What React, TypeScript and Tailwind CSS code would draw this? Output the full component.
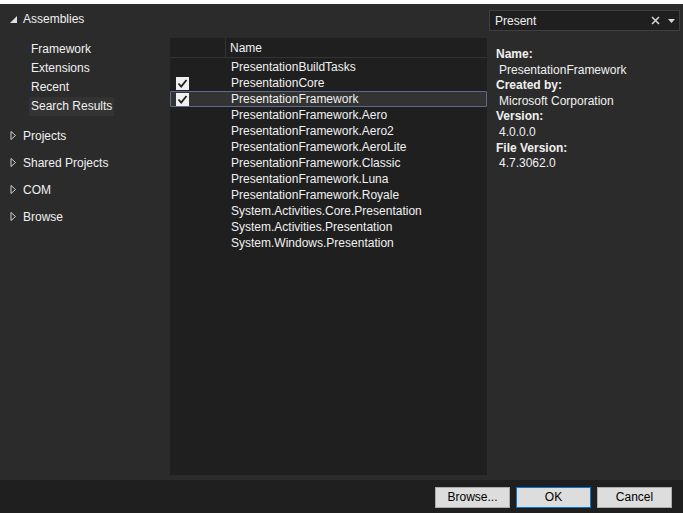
import React from "react";

const items = [
  "PresentationBuildTasks",
  "PresentationCore",
  "PresentationFramework",
  "PresentationFramework.Aero",
  "PresentationFramework.Aero2",
  "PresentationFramework.AeroLite",
  "PresentationFramework.Classic",
  "PresentationFramework.Luna",
  "PresentationFramework.Royale",
  "System.Activities.Core.Presentation",
  "System.Activities.Presentation",
  "System.Windows.Presentation",
];
const checked = [false, true, true];

function Check() {
  return (
    <div className="w-[13px] h-[13px] bg-[#f0f0f0] flex items-center justify-center">
      <svg width="11" height="11" viewBox="0 0 11 11">
        <path d="M1.5 5.5 L4.2 8.5 L9.5 2" stroke="#1f1f1f" strokeWidth="1.8" fill="none" />
      </svg>
    </div>
  );
}

function Closed() {
  return (
    <svg width="7" height="9" viewBox="0 0 7 9" className="shrink-0">
      <path d="M1 0.5 L5.5 4.5 L1 8.5 Z" stroke="#d0d0d0" strokeWidth="1" fill="none" />
    </svg>
  );
}

export default function App() {
  return (
    <div
      className="w-[683px] h-[513px] bg-[#2b2b2b] flex flex-col text-[12px] text-[#f1f1f1] overflow-hidden"
      style={{ fontFamily: '"Segoe UI", "Liberation Sans", Arial, sans-serif' }}
    >
      <div className="h-[4px] bg-white shrink-0" />
      <div className="flex h-[476px]">
        {/* left nav */}
        <div className="w-[170px] shrink-0 flex flex-col">
          <div className="flex items-center h-[18px] mt-[6px] pl-[10px] gap-[6px]">
            <svg width="7" height="7" viewBox="0 0 7 7">
              <path d="M7 0 L7 7 L0 7 Z" fill="#e0e0e0" />
            </svg>
            <span className="leading-[18px]">Assemblies</span>
          </div>
          <div className="flex flex-col mt-[12px] pl-[29px]">
            {["Framework", "Extensions", "Recent", "Search Results"].map((t, i) => (
              <div key={t} className="h-[19px] flex items-center">
                <span className={`px-[2px] leading-[19px] ${i === 3 ? "bg-[#333333]" : ""}`}>{t}</span>
              </div>
            ))}
          </div>
          <div className="flex flex-col mt-[6px]">
            {["Projects", "Shared Projects", "COM", "Browse"].map((t) => (
              <div key={t} className="h-[27px] flex items-center pl-[10px] gap-[6px]">
                <Closed />
                <span>{t}</span>
              </div>
            ))}
          </div>
        </div>
        {/* middle list */}
        <div className="w-[317px] shrink-0 mt-[34px] mb-[5px] bg-[#1f1f1f] flex flex-col">
          <div className="h-[20px] flex border-b border-[#333333] shrink-0">
            <div className="w-[56px] border-r border-[#333333]" />
            <div className="pl-[4px] leading-[20px]">Name</div>
          </div>
          <div className="flex flex-col pt-[1px]">
            {items.map((t, i) => (
              <div
                key={t}
                className={`h-[16px] flex items-center ${
                  i === 2 ? "border border-[#5b6b8c] bg-[#333333] rounded-[1px]" : "border border-transparent"
                }`}
              >
                <div className="w-[55px] pl-[5px] flex items-center">{checked[i] ? <Check /> : null}</div>
                <span className="pl-[5px] leading-[16px]">{t}</span>
              </div>
            ))}
          </div>
        </div>
        {/* right */}
        <div className="flex-1 flex flex-col pl-[2px] pr-[3px]">
          <div className="mt-[6px] h-[21px] border border-[#3f3f3f] bg-[#1f1f1f] flex items-center pl-[5px] pr-[4px]">
            <span className="flex-1">Present</span>
            <svg width="9" height="9" viewBox="0 0 9 9" className="mr-[8px]">
              <path d="M1 1 L8 8 M8 1 L1 8" stroke="#d8d8d8" strokeWidth="1.5" />
            </svg>
            <svg width="7" height="4" viewBox="0 0 7 4">
              <path d="M0 0 L7 0 L3.5 4 Z" fill="#d8d8d8" />
            </svg>
          </div>
          <div className="mt-[16px] pl-[7px] flex flex-col leading-[15.6px]">
            <span className="font-bold">Name:</span>
            <span className="pl-[3px]">PresentationFramework</span>
            <span className="font-bold">Created by:</span>
            <span className="pl-[3px]">Microsoft Corporation</span>
            <span className="font-bold">Version:</span>
            <span className="pl-[3px]">4.0.0.0</span>
            <span className="font-bold">File Version:</span>
            <span className="pl-[3px]">4.7.3062.0</span>
          </div>
        </div>
      </div>
      <div className="flex-1 bg-[#1f1f1f] flex items-start justify-end gap-[6px] pt-[7px] pr-[11px]">
        {[
          ["Browse...", false],
          ["OK", true],
          ["Cancel", false],
        ].map(([t, p]) => (
          <button
            key={t as string}
            className={`w-[75px] h-[21px] bg-[#dddddd] text-[#000] border ${
              p ? "border-[#0078d7]" : "border-[#adadad]"
            } leading-[19px]`}
          >
            {t as string}
          </button>
        ))}
      </div>
    </div>
  );
}
